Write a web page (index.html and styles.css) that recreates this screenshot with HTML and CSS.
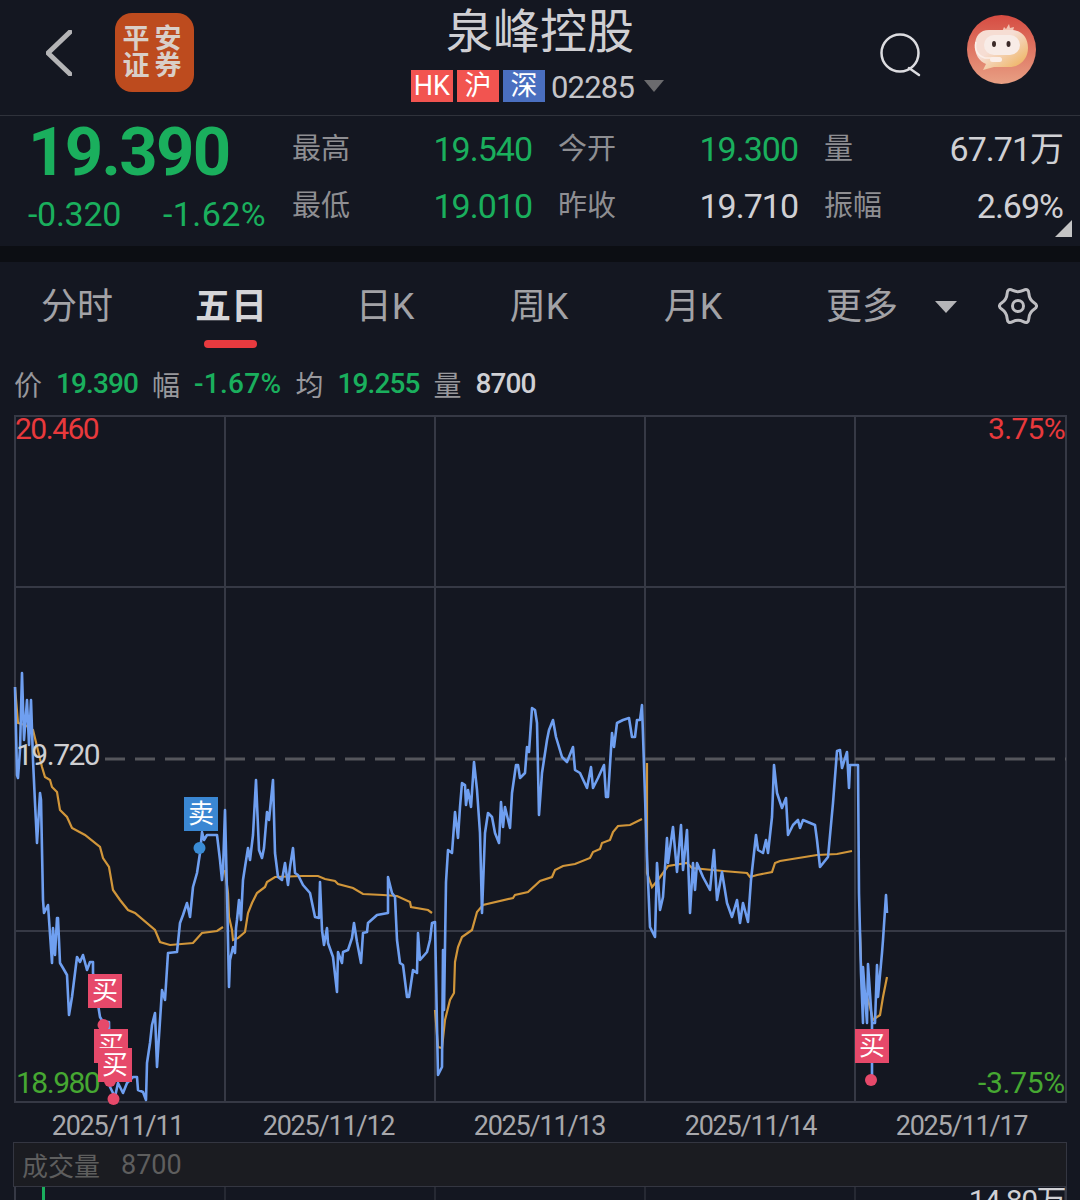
FILE: index.html
```html
<!DOCTYPE html>
<html lang="zh-CN">
<head>
  <meta charset="UTF-8">
  <title>泉峰控股 02285</title>
  <link rel="stylesheet" href="styles.css">
</head>
<body>

  <!-- 顶部 -->
  <header class="top-bar">
    <div class="top-left">
      <svg class="back-icon" width="26" height="46" viewBox="0 0 26 46"><polyline points="24,2 2,23 24,44" fill="none" stroke="#b4b4b6" stroke-width="5" stroke-linecap="round" stroke-linejoin="round"/></svg>
      <div class="broker-logo"><span>平安</span><span>证券</span></div>
    </div>
    <div class="stock-title">
      <div class="stock-name">泉峰控股</div>
      <div class="stock-tags">
        <span class="tag tag-red">HK</span>
        <span class="tag tag-red">沪</span>
        <span class="tag tag-blue">深</span>
        <span class="stock-code">02285</span>
        <span class="caret caret-small"></span>
      </div>
    </div>
    <div class="top-right">
      <svg class="search-icon" width="42" height="44" viewBox="0 0 42 44"><circle cx="20" cy="20" r="18.5" fill="none" stroke="#dcdce0" stroke-width="2.5"/><line x1="29" y1="35" x2="39" y2="42" stroke="#dcdce0" stroke-width="2.5" stroke-linecap="round"/></svg>
      <svg class="avatar" width="69" height="69" viewBox="0 0 69 69">
        <defs>
          <linearGradient id="avatarBg" x1="0" y1="0" x2="0" y2="1"><stop offset="0" stop-color="#d64c42"/><stop offset="1" stop-color="#e8a084"/></linearGradient>
          <linearGradient id="avatarFace" x1="0" y1="0" x2="1" y2="1"><stop offset="0.4" stop-color="#f6ddd3"/><stop offset="0.95" stop-color="#eeb057"/></linearGradient>
        </defs>
        <circle cx="34.5" cy="34.500" r="34.5" fill="url(#avatarBg)"/>
        <path d="M35 17l2-5 2 2 3-5 1 4 4-1-1 4 3 1-3 3H35z" fill="#f1c4b4"/>
        <path d="M22 15h22c11 0 17 8 17 18 0 12-9 19-19 19H27l-11 3 3-6C12 46 8 40 8 31c0-10 5-16 14-16z" fill="url(#avatarFace)"/>
        <rect x="17" y="20" width="36" height="20" rx="10" fill="#f8ece7"/>
        <ellipse cx="27" cy="29" rx="2" ry="3" fill="#3b2a28"/>
        <ellipse cx="41.500" cy="29" rx="2" ry="3" fill="#3b2a28"/>
        <path d="M9 27c-2 8 2 14 9 16h8" fill="none" stroke="#fbeee8" stroke-width="1.6"/>
        <rect x="23" y="42" width="12" height="5" rx="2.5" fill="#fbeee8"/>
      </svg>
    </div>
  </header>

  <!-- 报价 -->
  <section class="quote">
    <div class="quote-main">
      <div class="last-price">19.390</div>
      <div class="last-change">
        <span>-0.320</span>
        <span class="change-pct">-1.62%</span>
      </div>
    </div>
    <div class="quote-grid">
      <span class="q-label">最高</span><span class="q-val green">19.540</span>
      <span class="q-label">今开</span><span class="q-val green">19.300</span>
      <span class="q-label">量</span><span class="q-val light">67.71万</span>
      <span class="q-label">最低</span><span class="q-val green">19.010</span>
      <span class="q-label">昨收</span><span class="q-val light">19.710</span>
      <span class="q-label">振幅</span><span class="q-val light">2.69%</span>
    </div>
    <span class="corner-mark"></span>
  </section>

  <div class="band"></div>

  <!-- tabs -->
  <nav class="tabs">
    <span class="tab">分时</span>
    <span class="tab tab-active">五日</span>
    <span class="tab">日K</span>
    <span class="tab">周K</span>
    <span class="tab">月K</span>
    <span class="tab tab-more">更多<span class="caret"></span></span>
    <svg class="gear" width="40" height="40" viewBox="0 0 40 40">
      <path d="M36.13 16.75Q41 20 36.13 23.25Q31.26 26.5 30.88 32.34Q30.5 38.19 25.25 35.59Q20 33 14.75 35.59Q9.5 38.19 9.12 32.34Q8.74 26.5 3.87 23.25Q-1 20 3.87 16.75Q8.74 13.5 9.12 7.66Q9.5 1.81 14.75 4.41Q20 7 25.25 4.41Q30.5 1.81 30.88 7.66Q31.26 13.5 36.13 16.75Z" fill="none" stroke="#bebec2" stroke-width="3"/>
      <circle cx="20" cy="20" r="5.5" fill="none" stroke="#bebec2" stroke-width="3"/>
    </svg>
  </nav>

  <div class="info-row">
    <span class="info-label">价</span><span class="info-val green">19.390</span>
    <span class="info-label">幅</span><span class="info-val info-pct green">-1.67%</span>
    <span class="info-label">均</span><span class="info-val green">19.255</span>
    <span class="info-label">量</span><span class="info-val light">8700</span>
  </div>

  <!-- 五日走势 -->
  <div class="chart">
    <svg class="chart-svg" width="1080" height="690" viewBox="0 415 1080 690">
      <g stroke="#363945" stroke-width="2" fill="none">
        <rect x="15" y="416" width="1051" height="686"/>
        <line x1="225" y1="416" x2="225" y2="1102"/>
        <line x1="435" y1="416" x2="435" y2="1102"/>
        <line x1="645" y1="416" x2="645" y2="1102"/>
        <line x1="855" y1="416" x2="855" y2="1102"/>
        <line x1="15" y1="587" x2="1066" y2="587"/>
        <line x1="15" y1="931" x2="1066" y2="931"/>
      </g>
      <line x1="105" y1="759" x2="1066" y2="759" stroke="#55565c" stroke-width="3" stroke-dasharray="20 10"/>

      <g fill="none" stroke="#d1963a" stroke-width="2.200">
        <polyline points="15,687 18,723 25,725 33,730 42,767 45,777 50,780 52,787 57,792 60,810 67,817 72,828 85,835 100,847 103,858 109,867 113,890 120,900 128,910 135,913 155,930 160,942 170,945 193,943 202,933 217,931 223,927"/>
        <polyline points="225,870 228,893 229,917 232,930 233,940 238,938 245,932 248,913 252,903 257,893 265,887 267,882 275,877 302,876 318,876 325,879 335,881 338,884 353,888 363,894 383,895 397,896 410,902 411,907 428,910 432,913"/>
        <polyline points="435,1010 438,1047 442,1048 445,1020 450,1000 454,993 455,962 458,947 462,937 472,930 477,912 483,905 513,898 515,895 528,892 540,881 552,877 555,870 563,866 575,864 590,858 593,852 600,849 602,843 610,840 613,832 618,826 630,825 642,819"/>
        <polyline points="647,763 647,873 652,887 658,880 668,866 687,863 692,868 723,871 747,873 750,877 757,875 772,872 775,863 780,861 817,855 837,854 852,851"/>
        <polyline points="860,933 862,990 867,997 870,1007 873,1020 880,1015 883,997 887,977"/>
      </g>

      <polyline fill="none" stroke="#6f9ff0" stroke-width="2.600" stroke-linejoin="round" points="15,687 17,775 18,778 20,750 22,673 24,740 27,700 29,745 31,700 33,760 35,803 37,843 40,793 41,800 43,900 44,913 48,905 52,963 53,928 55,955 57,918 58,918 60,963 63,968 67,975 69,1015 72,997 77,957 80,962 83,955 87,970 90,962 93,962 93,973 100,1017 103,1022 109,1022 110,1087 115,1097 118,1083 123,1093 127,1083 133,1077 137,1077 138,1090 143,1092 146,1100 147,1063 150,1043 152,1025 155,1013 157,1067 162,990 165,1000 168,953 177,952 180,923 183,915 187,903 190,917 193,887 197,873 200,853 202,832 204,840 207,835 217,835 220,860 222,880 223,870 225,810 227,893 229,987 230,960 233,947 235,953 236,928 237,920 239,900 241,920 243,880 245,867 248,848 250,860 253,835 256,780 259,850 262,858 264,848 267,812 269,820 273,780 275,853 278,877 282,880 285,863 288,885 290,867 293,848 295,873 298,875 303,885 310,893 315,917 319,918 320,882 322,930 324,945 327,928 328,943 333,957 337,992 338,952 342,963 343,952 348,950 352,938 354,923 357,942 361,963 363,933 367,932 368,923 377,915 388,913 388,877 392,893 395,897 397,940 400,963 403,965 407,997 409,997 413,970 417,973 418,933 420,960 427,952 430,940 432,923 435,922 437,1027 438,1075 442,1067 443,950 444,1010 446,882 448,850 452,853 455,812 458,838 460,807 462,783 465,785 466,805 468,790 471,807 474,762 477,790 480,833 482,913 485,833 488,813 492,817 495,833 499,843 501,802 503,827 505,807 510,828 512,793 516,765 518,765 520,778 525,773 527,747 529,752 532,708 535,710 537,723 539,815 542,773 547,740 549,730 553,720 556,737 562,757 567,762 573,747 575,770 580,773 587,788 591,767 593,788 598,778 604,765 606,797 608,797 612,733 614,747 617,723 623,720 629,718 632,737 635,737 637,720 640,720 642,705 643,735 647,857 650,927 655,937 657,863 660,910 663,897 667,838 668,863 673,827 677,872 681,825 683,870 687,830 690,913 693,863 695,890 697,863 703,877 710,890 714,850 717,900 722,872 727,903 732,917 737,900 740,923 743,903 748,922 751,880 756,835 758,850 763,853 766,840 768,853 772,817 774,765 777,793 782,808 786,798 788,835 793,825 798,820 800,828 803,820 815,825 817,840 820,867 828,857 833,803 837,751 840,750 842,768 847,752 849,788 850,765 858,765 859,893 861,973 863,1023 863,967 867,1023 868,964 872,1023 872,1075 872,1023 875,1023 877,965 878,997 882,953 883,940 886,895 887,913"/>

      <g fill="#e6496a">
        <circle cx="103.500" cy="1025" r="6"/>
        <circle cx="110" cy="1081" r="6"/>
        <circle cx="113.500" cy="1099" r="6"/>
        <circle cx="871" cy="1080" r="6"/>
      </g>
      <circle cx="199.500" cy="848" r="6" fill="#3a8cd6"/>
    </svg>

    <span class="axis-label a-top-left">20.460</span>
    <span class="axis-label a-top-right">3.75%</span>
    <span class="axis-label a-mid-left">19.720</span>
    <span class="axis-label a-bot-left">18.980</span>
    <span class="axis-label a-bot-right">-3.75%</span>

    <span class="trade trade-sell m-sell">卖</span>
    <span class="trade trade-buy m-buy1">买</span>
    <span class="trade trade-buy m-buy2">买</span>
    <span class="trade trade-buy m-buy3">买</span>
    <span class="trade trade-buy m-buy4">买</span>
  </div>

  <div class="dates">
    <span>2025/11/11</span>
    <span>2025/11/12</span>
    <span>2025/11/13</span>
    <span>2025/11/14</span>
    <span>2025/11/17</span>
  </div>

  <div class="volume-bar">
    <span class="volume-name">成交量</span>
    <span class="volume-num">8700</span>
  </div>

  <div class="volume-pane">
    <span class="volume-tick"></span>
    <span class="volume-max">14.80万</span>
  </div>

</body>
</html>
```

FILE: styles.css
```css
* {
  box-sizing: border-box;
}

html,
body {
  margin: 0;
  height: 1200px;
  overflow: hidden;
}

body {
  background: #141721;
  color: #d0d0d4;
  font-family: Roboto, "Noto Sans CJK SC", sans-serif;
  width: 1080px;
}

.green {
  color: #1aaf5d;
}

.light {
  color: #d0d0d4;
}

/* 顶部 */
.top-bar {
  height: 116px;
  border-bottom: 1px solid #2f323b;
  display: grid;
  grid-template-columns: 1fr auto 1fr;
}

.top-left {
  display: flex;
  align-items: flex-start;
  padding-left: 46px;
}

.back-icon {
  margin-top: 30px;
}

.broker-logo {
  width: 79px;
  height: 79px;
  margin: 13px 0 0 43px;
  border-radius: 17px;
  background: #bd4b1e;
  color: #d9cfc8;
  font-size: 27px;
  font-weight: 700;
  line-height: 27px;
  letter-spacing: 5px;
  display: flex;
  flex-direction: column;
  align-items: center;
  justify-content: center;
}

.stock-title {
  display: flex;
  flex-direction: column;
  align-items: center;
  padding-top: 2px;
}

.stock-name {
  font-size: 47px;
  line-height: 60px;
  color: #cfcfd3;
}

.stock-tags {
  display: flex;
  align-items: center;
  margin: 8px 5px 0 0;
  height: 32px;
}

.tag {
  width: 42px;
  height: 32px;
  margin-right: 4px;
  color: #fff;
  font-size: 27px;
  line-height: 32px;
  text-align: center;
}

.tag-red {
  background: #f25450;
}

.tag-blue {
  background: #4a6fc0;
}

.stock-code {
  margin: 3px 0 0 2px;
  font-size: 31px;
  letter-spacing: -.8px;
  color: #c4c4c8;
}

.caret {
  display: inline-block;
  width: 0;
  height: 0;
  border-left: 11px solid transparent;
  border-right: 11px solid transparent;
  border-top: 12px solid #b5b5b8;
}

.caret-small {
  margin-left: 10px;
  border-left-width: 10px;
  border-right-width: 10px;
  border-top-color: #6b6b6e;
}

.top-right {
  display: flex;
  justify-content: flex-end;
  align-items: flex-start;
  padding-right: 44px;
}

.search-icon {
  margin-top: 33px;
}

.avatar {
  margin: 15px 0 0 45px;
}

/* 报价 */
.quote {
  position: relative;
  height: 130px;
  display: flex;
}

.quote-main {
  width: 292px;
  flex-shrink: 0;
}

.last-price {
  margin: 1px 0 0 28px;
  font-size: 67px;
  line-height: 70px;
  font-weight: 700;
  letter-spacing: -1.700px;
  color: #1aaf5d;
}

.last-change {
  margin: 7px 26px 0 28px;
  display: flex;
  justify-content: space-between;
  font-size: 34px;
  line-height: 40px;
  letter-spacing: -.3px;
  color: #1aaf5d;
}

.change-pct {
  letter-spacing: .4px;
}

.quote-grid {
  display: grid;
  grid-template-columns: 60px 154px 60px 154px 60px 153px;
  column-gap: 26px;
  grid-auto-rows: 57px;
  padding-top: 5px;
}

.q-label {
  font-size: 29px;
  line-height: 57px;
  color: #8e8e92;
  white-space: nowrap;
}

.q-val {
  font-size: 34px;
  line-height: 57px;
  letter-spacing: -1px;
  text-align: right;
  white-space: nowrap;
}

.corner-mark {
  position: absolute;
  right: 8px;
  bottom: 9px;
  width: 0;
  height: 0;
  border-left: 17px solid transparent;
  border-bottom: 17px solid #c4c4c4;
}

.band {
  height: 16px;
  background: #0c0e13;
}

/* tabs */
.tabs {
  height: 92px;
  display: flex;
  align-items: center;
  padding: 2px 0 4px;
}

.tab {
  width: 154px;
  text-align: center;
  font-size: 36px;
  line-height: 50px;
  color: #a2a2a6;
}

.tab-active {
  position: relative;
  color: #d5d5d8;
  font-weight: 700;
}

.tab-active::after {
  content: "";
  position: absolute;
  left: 50px;
  bottom: -16px;
  width: 53px;
  height: 8px;
  border-radius: 4px;
  background: #e83a3f;
}

.tab-more {
  width: auto;
  margin-left: 56px;
  display: flex;
  align-items: center;
}

.tab-more .caret {
  margin-left: 37px;
}

.gear {
  margin: 0 0 2px 41px;
}

.info-row {
  height: 61px;
  padding: 0 0 2px 14px;
  display: flex;
  align-items: center;
  gap: 14px;
  font-size: 28px;
  font-weight: 500;
  letter-spacing: -.9px;
}

.info-label {
  font-size: 28px;
  font-weight: 400;
  color: #98989c;
  letter-spacing: 0;
}

.info-pct {
  letter-spacing: .3px;
}

/* 走势图 */
.chart {
  position: relative;
  height: 690px;
}

.chart-svg {
  display: block;
}

.axis-label {
  position: absolute;
  font-size: 30px;
  line-height: 34px;
  letter-spacing: -1.500px;
}

.a-top-left {
  left: 15px;
  top: -3px;
  color: #e8393c;
}

.a-top-right {
  right: 15px;
  top: -3px;
  color: #e8393c;
  letter-spacing: -.7px;
}

.a-mid-left {
  left: 16px;
  top: 323px;
  color: #cfcfd2;
}

.a-bot-left {
  left: 16px;
  top: 651px;
  color: #46a832;
}

.a-bot-right {
  right: 15px;
  top: 651px;
  color: #46a832;
  letter-spacing: -.3px;
}

.trade {
  position: absolute;
  width: 34px;
  height: 34px;
  color: #fff;
  font-size: 26px;
  line-height: 34px;
  text-align: center;
}

.trade-sell {
  background: #3a87d3;
}

.trade-buy {
  background: #e6496a;
}

.m-sell {
  left: 184px;
  top: 382px;
}

.m-buy1 {
  left: 88px;
  top: 559px;
}

.m-buy2 {
  left: 94px;
  top: 614px;
}

.m-buy3 {
  left: 98px;
  top: 633px;
}

.m-buy4 {
  left: 855px;
  top: 614px;
}

.dates {
  height: 37px;
  padding-left: 12px;
  display: grid;
  grid-template-columns: repeat(5, 211px);
  text-align: center;
  font-size: 27px;
  line-height: 42px;
  letter-spacing: -1.200px;
  color: #a8a8ac;
}

.volume-bar {
  margin: 0 13px;
  height: 45px;
  background: #1b1c21;
  border: 1px solid #343641;
  padding-left: 8px;
  display: flex;
  align-items: center;
  gap: 21px;
}

.volume-name {
  font-size: 26px;
  color: #5e5e5e;
}

.volume-num {
  font-size: 27px;
  color: #5e5e5e;
}

.volume-pane {
  position: relative;
  margin-left: 14px;
  width: 1053px;
  height: 20px;
  border-left: 2px solid #363945;
  border-right: 2px solid #363945;
  background: linear-gradient(to right, transparent 208px, #262933 208px, #262933 210px) 0 0 / 210px 100%;
  overflow: hidden;
}

.volume-tick {
  position: absolute;
  left: 26px;
  top: 0;
  width: 3px;
  height: 20px;
  background: #1aaf5d;
}

.volume-max {
  position: absolute;
  right: 0;
  top: -3px;
  font-size: 30px;
  line-height: 34px;
  letter-spacing: -1.500px;
  color: #d0d0d4;
}
```
